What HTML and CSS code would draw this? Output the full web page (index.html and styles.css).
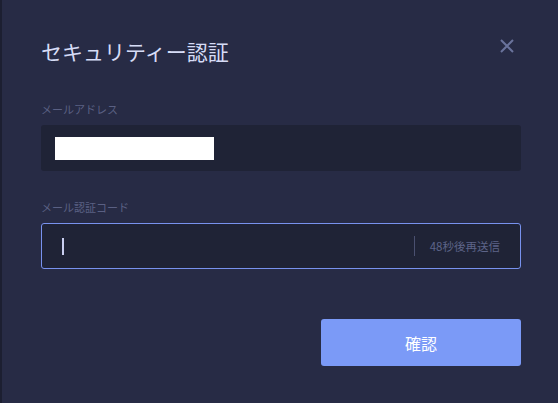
FILE: index.html
```html
<!DOCTYPE html>
<html lang="ja">
<head>
<meta charset="utf-8">
<title>セキュリティー認証</title>
<link rel="stylesheet" href="styles.css">
</head>
<body>
<div class="edge"></div>
<div class="modal">
  <div class="header">
    <h1 class="title">セキュリティー認証</h1>
    <button class="close" aria-label="閉じる">
      <svg width="14" height="14" viewBox="0 0 14 14"><path d="M1 1L13 13M13 1L1 13" stroke="#6a739c" stroke-width="2" fill="none"/></svg>
    </button>
  </div>
  <div class="field first">
    <div class="label">メールアドレス</div>
    <div class="input">
      <span class="mask"></span>
    </div>
  </div>
  <div class="field">
    <div class="label">メール認証コード</div>
    <div class="input active">
      <span class="caret"></span>
      <span class="spacer"></span>
      <span class="divider"></span>
      <span class="resend">48秒後再送信</span>
    </div>
  </div>
  <div class="actions">
    <button class="confirm">確認</button>
  </div>
</div>
</body>
</html>
```
FILE: styles.css
```css
html, body {
  margin: 0;
  padding: 0;
  height: 100%;
}
body {
  background: #272b45;
  font-family: "Noto Sans CJK JP", "Noto Sans", sans-serif;
  display: flex;
  overflow: hidden;
}
.edge {
  width: 2px;
  flex: none;
  background: #1c1f31;
}
.modal {
  flex: 1;
  padding: 36px 37px 0 39px;
}
.header {
  display: flex;
  justify-content: space-between;
  align-items: flex-start;
}
.title {
  margin: 0;
  font-size: 21px;
  font-weight: 400;
  line-height: 30px;
  color: #d6dcf6;
}
.close {
  background: none;
  border: 0;
  padding: 0;
  margin: 3px 7px 0 0;
  width: 14px;
  height: 14px;
  display: block;
  cursor: pointer;
}
.close svg { display: block; }
.field { margin-top: 28px; }
.field.first { margin-top: 35px; }
.label {
  font-size: 11px;
  line-height: 16px;
  color: #5a6083;
  margin-bottom: 8px;
}
.input {
  height: 46px;
  box-sizing: border-box;
  background: #1f2336;
  border-radius: 3px;
  border: 1px solid transparent;
  display: flex;
  align-items: center;
  padding: 0 20px 0 13px;
}
.mask {
  width: 159px;
  height: 23px;
  background: #ffffff;
}
.input.active {
  border-color: #7892ee;
}
.caret {
  width: 2px;
  height: 17px;
  background: #c9cef0;
  margin-left: 7px;
}
.spacer { flex: 1; }
.divider {
  width: 1px;
  height: 20px;
  background: #4a5070;
  margin-right: 15px;
}
.resend {
  font-size: 11.5px;
  color: #5d6488;
  line-height: 16px;
}
.actions {
  display: flex;
  justify-content: flex-end;
  margin-top: 50px;
}
.confirm {
  width: 200px;
  height: 47px;
  border: 0;
  border-radius: 3px;
  background: #7b9af7;
  color: #ffffff;
  font-family: "Noto Sans CJK JP", sans-serif;
  font-size: 16px;
  cursor: pointer;
}
```
